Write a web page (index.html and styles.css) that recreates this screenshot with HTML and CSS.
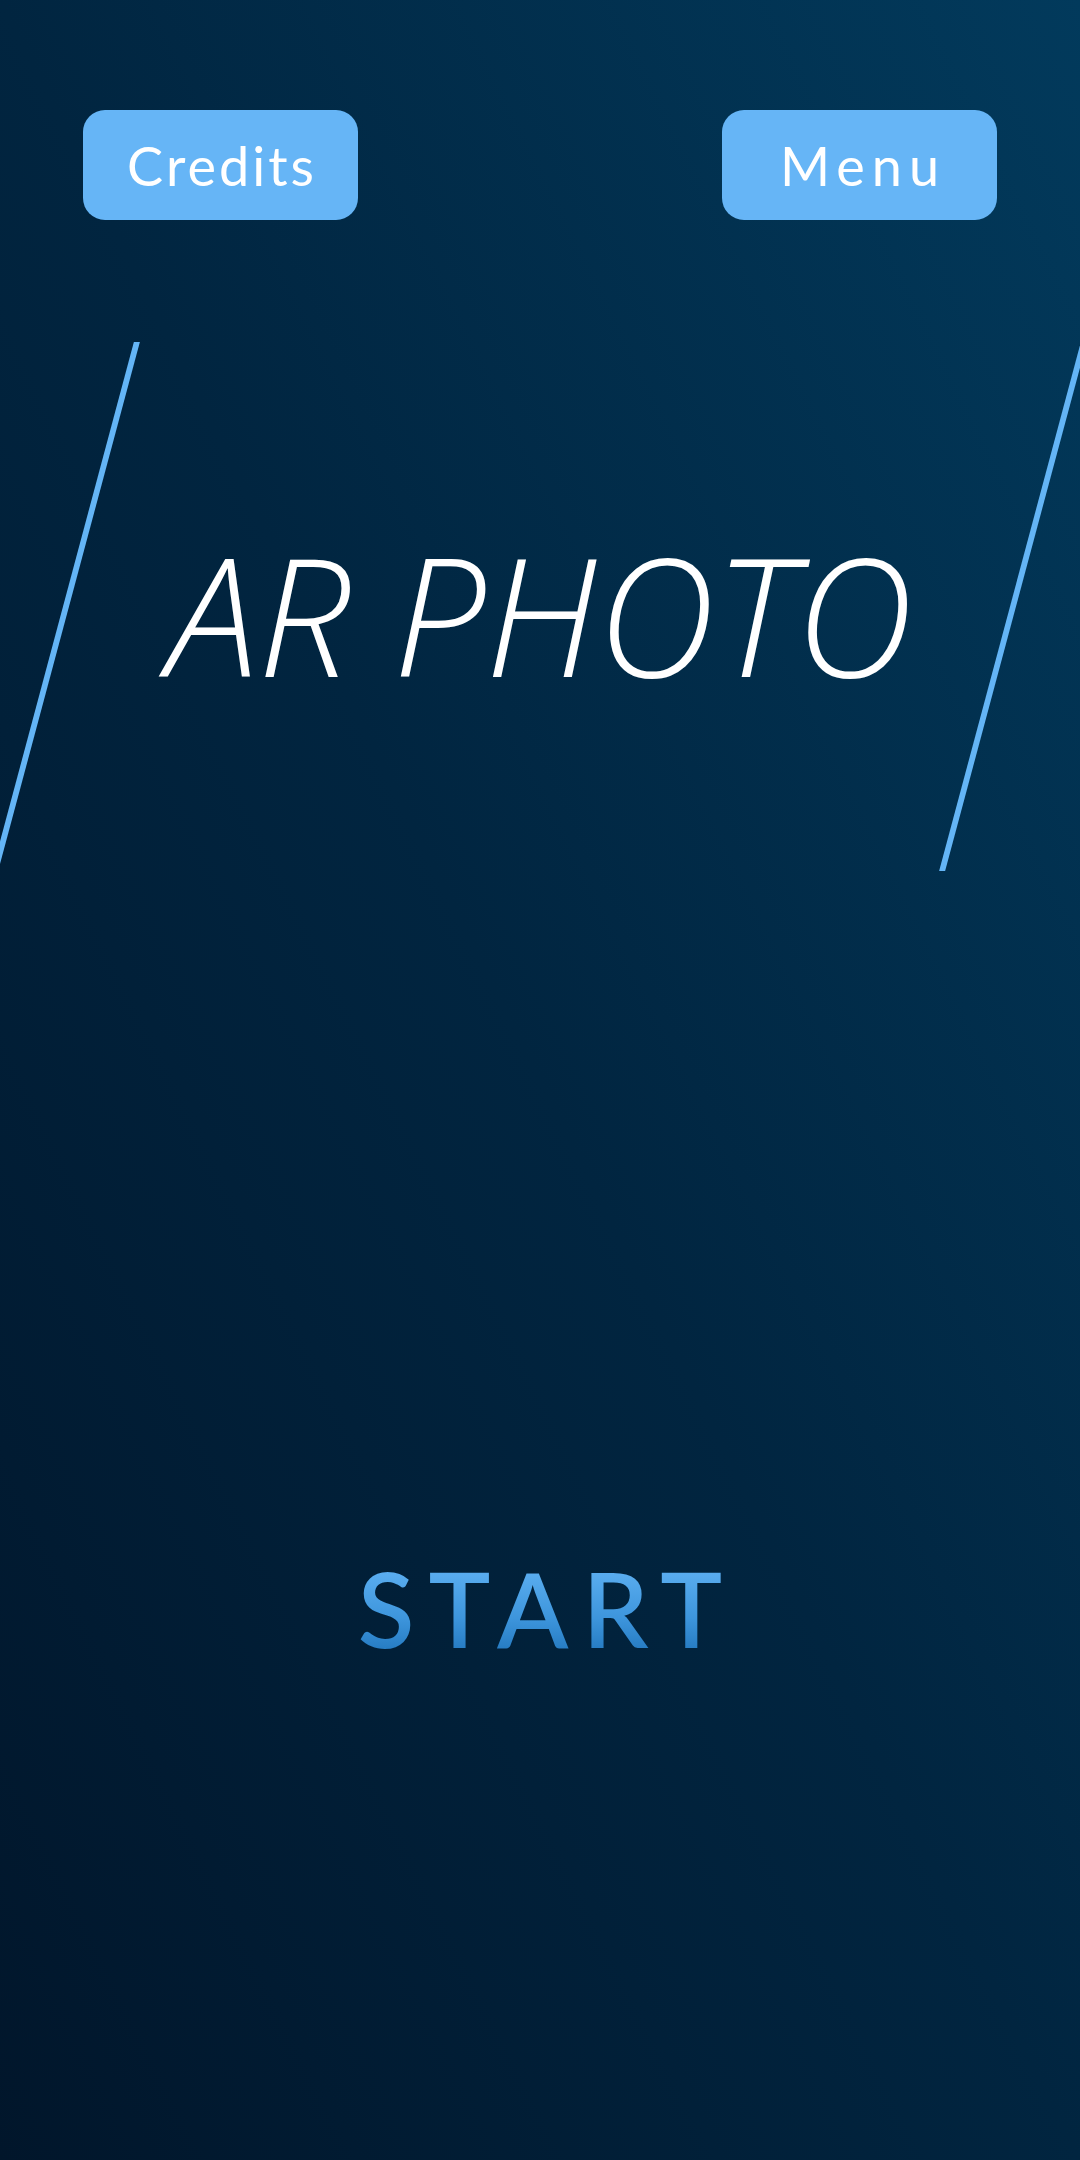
FILE: index.html
```html
<!DOCTYPE html>
<html>
<head>
<meta charset="utf-8">
<link rel="stylesheet" href="styles.css">
</head>
<body>
<div class="screen">
  <header class="topbar">
    <button class="btn btn-credits">Credits</button>
    <button class="btn btn-menu">Menu</button>
  </header>
  <section class="hero">
    <div class="frame"></div>
    <h1 class="title">AR PHOTO</h1>
  </section>
  <div class="start-wrap">
    <span class="start">START</span>
  </div>
</div>
</body>
</html>
```

FILE: styles.css
```css
html, body {
  margin: 0;
  padding: 0;
}
body {
  width: 1080px;
  height: 2160px;
  overflow: hidden;
}
.screen {
  width: 1080px;
  height: 2160px;
  background: linear-gradient(to top right, #01162b 0%, #012540 50%, #023a5c 100%);
  display: flex;
  flex-direction: column;
  overflow: hidden;
}
.topbar {
  display: flex;
  justify-content: space-between;
  padding: 110px 83px 0 83px;
}
.btn {
  width: 275px;
  height: 110px;
  border: none;
  border-radius: 22px;
  background: #66b5f6;
  color: #ffffff;
  font-family: "Lato", "Open Sans", sans-serif;
  font-size: 54px;
  font-weight: 400;
  display: flex;
  align-items: center;
  justify-content: center;
  padding: 0;
}
.btn-credits {
  letter-spacing: 3px;
  padding-left: 3px;
}
.btn-menu {
  letter-spacing: 7px;
  padding-left: 7px;
}
.hero {
  position: relative;
  height: 529px;
  margin-top: 122px;
  display: flex;
  align-items: center;
  justify-content: center;
}
.frame {
  position: absolute;
  left: 63px;
  top: 0;
  width: 953px;
  height: 529px;
  box-sizing: border-box;
  border-left: 6px solid #64b5f6;
  border-right: 6px solid #64b5f6;
  transform: skewX(-15deg);
}
.title {
  margin: 14px 0 0 0;
  font-family: "Open Sans", "Lato", sans-serif;
  font-style: italic;
  font-weight: 300;
  font-size: 164px;
  line-height: 1;
  color: #ffffff;
  letter-spacing: 0;
  white-space: nowrap;
}
.start-wrap {
  display: flex;
  justify-content: center;
  margin-top: 685px;
}
.start {
  font-family: "Lato", "Open Sans", sans-serif;
  font-size: 104px;
  font-weight: 600;
  line-height: 1;
  letter-spacing: 14px;
  padding-left: 14px;
  background: linear-gradient(to bottom, #64b5f6 0%, #3d95dc 60%, #1f74bb 100%);
  -webkit-background-clip: text;
  background-clip: text;
  color: transparent;
}
```
